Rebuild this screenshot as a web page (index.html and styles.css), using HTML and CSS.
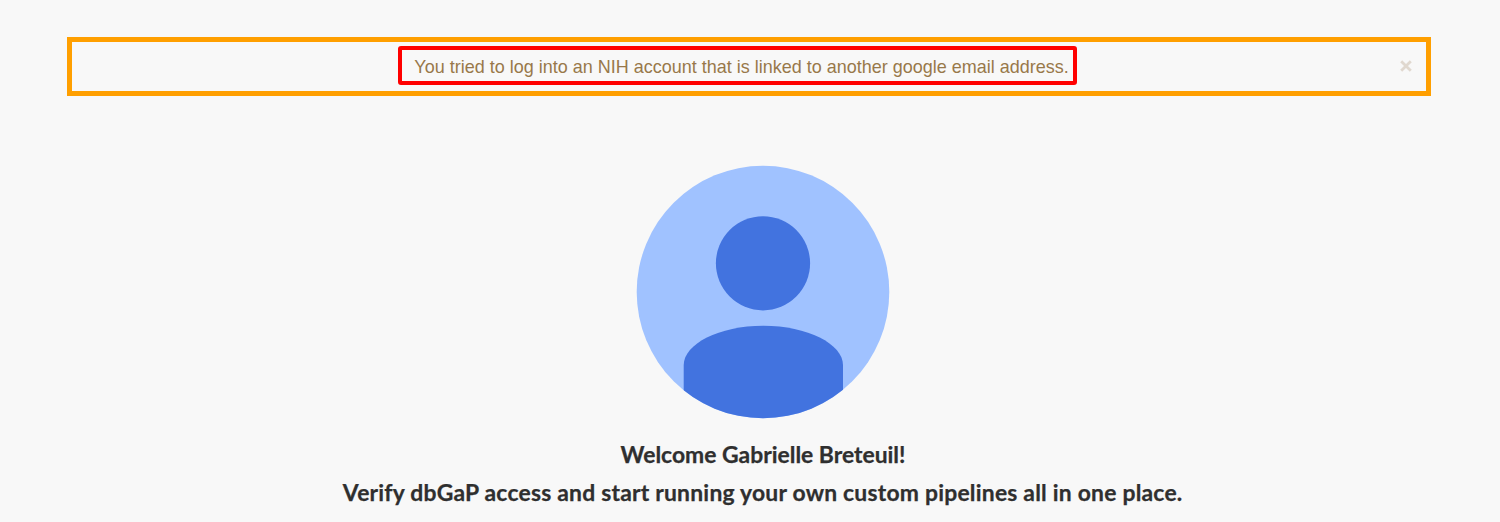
FILE: index.html
```html
<!DOCTYPE html>
<html lang="en">
<head>
<meta charset="utf-8">
<title>Welcome</title>
<link rel="stylesheet" href="styles.css">
</head>
<body>
<div class="alert">
  <div class="alert-message"><span class="alert-text">You tried to log into an NIH account that is linked to another google email address.</span></div>
  <button class="alert-close" aria-label="Close"><svg width="12" height="12" viewBox="0 0 12 12"><path d="M1.2 1.2 10.8 10.8M10.8 1.2 1.2 10.8"/></svg></button>
</div>
<main class="profile">
  <svg class="avatar" width="254" height="254" viewBox="0 0 254 254">
    <defs><clipPath id="disc"><circle cx="127" cy="127" r="126.3"/></clipPath></defs>
    <circle class="avatar-bg" cx="127" cy="127" r="126.3"/>
    <g class="avatar-fg" clip-path="url(#disc)">
      <circle cx="127" cy="98.3" r="47.1"/>
      <path d="M47.7 254V200C47.7 179 83 160.7 127.3 160.7S207 179 207 200V254Z"/>
    </g>
  </svg>
  <h1 class="welcome">Welcome Gabrielle Breteuil!</h1>
  <p class="tagline">Verify dbGaP access and start running your own custom pipelines all in one place.</p>
</main>
</body>
</html>
```
FILE: styles.css
```css
* { box-sizing: border-box; }
body {
  margin: 0;
  height: 522px;
  padding-top: 37px;
  background: #f8f8f8;
  overflow: hidden;
}
.alert {
  display: flex;
  align-items: center;
  width: 1364px;
  height: 59px;
  margin-left: 67px;
  padding: 0 15px 0 326px;
  border: 5px solid #ff9f00;
}
.alert-message {
  display: flex;
  align-items: center;
  justify-content: center;
  width: 679px;
  height: 39px;
  margin-top: -3px;
  padding: 3px 0 0 9px;
  border: 4px solid #ff0000;
  border-radius: 3px;
}
.alert-text {
  font: 19px/24px "Liberation Sans", Arial, sans-serif;
  transform: scaleX(0.947);
  white-space: nowrap;
  color: #98784a;
}
.alert-close {
  display: flex;
  margin: -2px -1px 0 auto;
  padding: 0;
  border: 0;
  background: none;
}
.alert-close path { fill: none; stroke: #e0d8cf; stroke-width: 2.8; }
.profile {
  display: flex;
  flex-direction: column;
  align-items: center;
  width: 1526px;
  padding-top: 69px;
}
.avatar { display: block; }
.avatar-bg { fill: #a0c2ff; }
.avatar-fg { fill: #4273df; }
.welcome, .tagline {
  margin: 0;
  font: bold 22px/38px Lato, sans-serif;
  color: #2f2f2f;
  white-space: nowrap;
  transform: scaleX(1.04);
  -webkit-text-stroke: 0.25px #2f2f2f;
}
.welcome { margin-top: 17px; }
.tagline { letter-spacing: 0.21px; }
```
